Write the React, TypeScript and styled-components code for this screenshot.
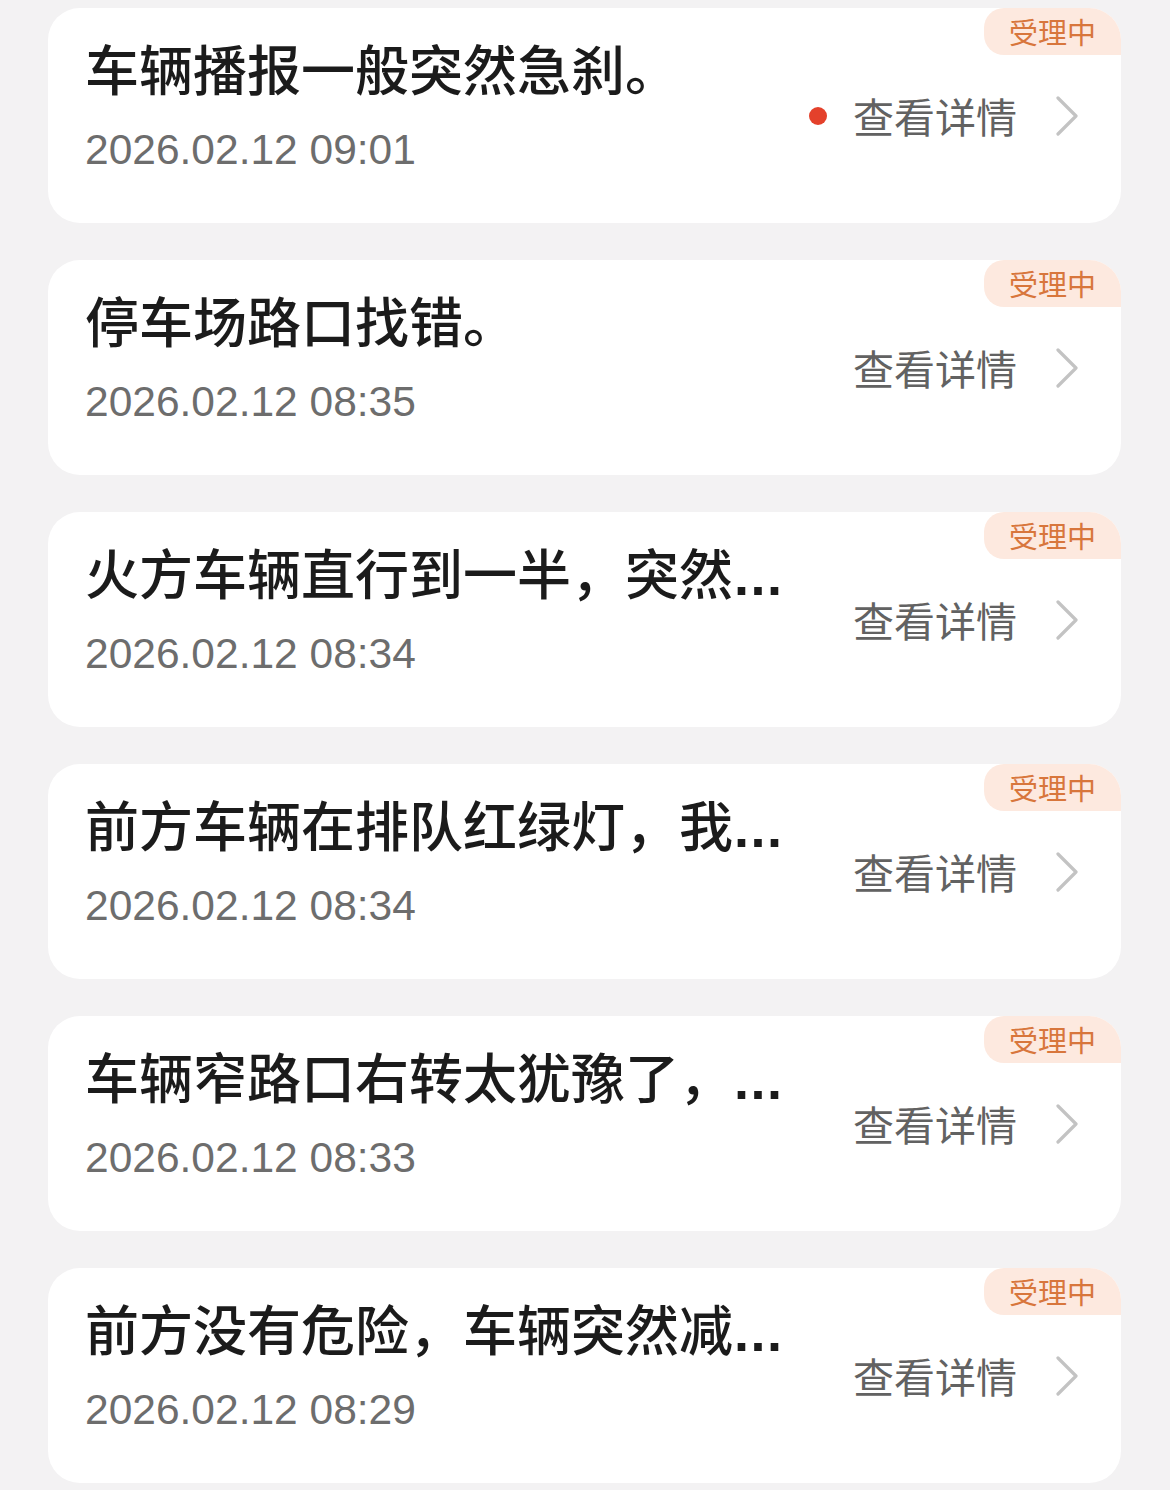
import React from 'react';
import styled, { createGlobalStyle } from 'styled-components';

const GlobalStyle = createGlobalStyle`
  html, body {
    margin: 0;
    padding: 0;
    background: #f3f2f3;
  }
`;

const Page = styled.div`
  width: 1170px;
  height: 1490px;
  box-sizing: border-box;
  padding: 8px 49px 0 48px;
  display: flex;
  flex-direction: column;
  gap: 37px;
  background: #f3f2f3;
  font-family: 'Liberation Sans', 'Noto Sans CJK SC', sans-serif;
`;

const Card = styled.div`
  position: relative;
  height: 215px;
  flex-shrink: 0;
  box-sizing: border-box;
  padding: 0 42px 0 37px;
  display: flex;
  background: #ffffff;
  border-radius: 32px;
  overflow: hidden;
`;

const Badge = styled.div`
  position: absolute;
  top: 0;
  right: 0;
  width: 137px;
  height: 47px;
  display: flex;
  align-items: center;
  justify-content: center;
  background: #fde9df;
  border-radius: 20px 0 0 20px;
  color: #d8763c;
  font-family: 'Noto Sans CJK SC', sans-serif;
  font-size: 29px;
  line-height: 29px;
`;

const Info = styled.div`
  flex: 1;
  min-width: 0;
  padding-top: 37px;
  display: flex;
  flex-direction: column;
  gap: 29px;
`;

const Title = styled.div`
  color: #1b1b1b;
  font-size: 54px;
  line-height: 54px;
  font-weight: 500;
  white-space: nowrap;
`;

const More = styled.span`
  font-weight: 700;
  letter-spacing: 1.5px;
  margin-left: 1px;
`;

const Time = styled.div`
  color: #6d6d6d;
  font-size: 42.5px;
  line-height: 43px;
`;

const Action = styled.div`
  align-self: center;
  display: flex;
  align-items: center;
`;

const Dot = styled.span`
  width: 18px;
  height: 18px;
  border-radius: 50%;
  background: #e4412b;
  margin-right: 26px;
`;

const ActionText = styled.span`
  color: #626262;
  font-family: 'Noto Sans CJK SC', sans-serif;
  font-size: 41px;
  line-height: 41px;
`;

const Chevron = styled.svg`
  margin-left: 38px;
  width: 24px;
  height: 40px;
`;

type Item = { title: string; time: string; cut?: boolean; unread?: boolean };

const items: Item[] = [
  { title: '车辆播报一般突然急刹。', time: '2026.02.12 09:01', unread: true },
  { title: '停车场路口找错。', time: '2026.02.12 08:35' },
  { title: '火方车辆直行到一半，突然', time: '2026.02.12 08:34', cut: true },
  { title: '前方车辆在排队红绿灯，我', time: '2026.02.12 08:34', cut: true },
  { title: '车辆窄路口右转太犹豫了，', time: '2026.02.12 08:33', cut: true },
  { title: '前方没有危险，车辆突然减', time: '2026.02.12 08:29', cut: true },
];

export default function App() {
  return (
    <>
      <GlobalStyle />
      <Page>
        {items.map((item, i) => (
          <Card key={i}>
            <Badge>受理中</Badge>
            <Info>
              <Title>
                {item.title}
                {item.cut && <More>...</More>}
              </Title>
              <Time>{item.time}</Time>
            </Info>
            <Action>
              {item.unread && <Dot />}
              <ActionText>查看详情</ActionText>
              <Chevron viewBox="0 0 24 40" fill="none">
                <polyline
                  points="3,2 21,20 3,38"
                  stroke="#c3c3c3"
                  strokeWidth="3.2"
                  strokeLinecap="round"
                  strokeLinejoin="round"
                />
              </Chevron>
            </Action>
          </Card>
        ))}
      </Page>
    </>
  );
}
